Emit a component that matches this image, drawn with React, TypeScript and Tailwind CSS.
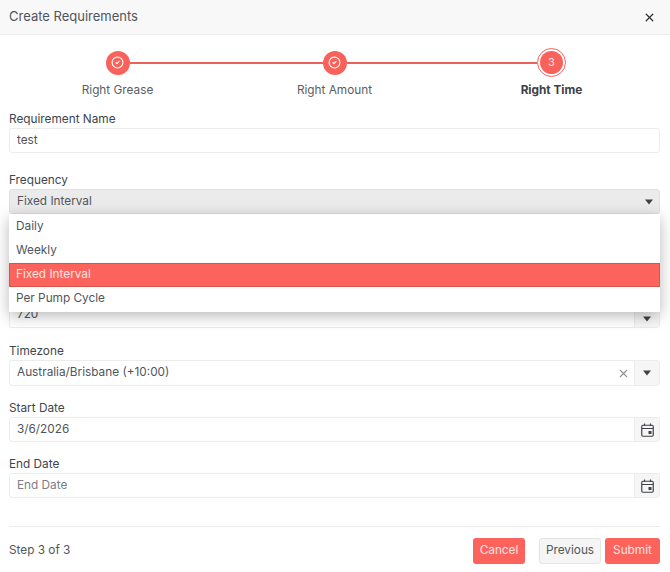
import { CircleCheck, X } from 'lucide-react'

const Caret = () => (
  <svg width="8" height="6" viewBox="0 0 8 6" className="text-[#3f4247]">
    <path d="M0 0.5h8L4 5.5z" fill="currentColor" />
  </svg>
)

const CalendarIcon = () => (
  <svg width="13" height="14" viewBox="0 0 13 14" fill="none" className="text-[#3f4247]">
    <rect x="0.75" y="2.25" width="11.5" height="11" rx="1.2" stroke="currentColor" strokeWidth="1.2" />
    <path d="M0.75 5.5h11.5" stroke="currentColor" strokeWidth="1.2" />
    <path d="M3.5 0.5v2.5M9.5 0.5v2.5" stroke="currentColor" strokeWidth="1.2" />
    <rect x="7.5" y="8" width="3" height="3" fill="currentColor" />
  </svg>
)

const AddOn = ({ children }: { children: React.ReactNode }) => (
  <div className="flex w-[25px] shrink-0 items-center justify-center border-l border-[#ececec] bg-[#f6f6f6]">
    {children}
  </div>
)

const Label = ({ children }: { children: React.ReactNode }) => (
  <div className="h-[18px] text-[11.8px] leading-[18px] text-[#40454d]">{children}</div>
)

const inputClass =
  'min-w-0 flex-1 bg-transparent px-[7px] text-[11.8px] text-[#50555c] outline-none placeholder:text-[#7b8087]'

const Step = ({
  label,
  lineLeft,
  lineRight,
  current,
}: {
  label: string
  lineLeft?: boolean
  lineRight?: boolean
  current?: boolean
}) => (
  <div className="flex flex-col items-center">
    <div className="flex h-[29px] w-full items-center">
      <div className={`h-[2px] flex-1 ${lineLeft ? 'bg-[#e9625c]' : ''}`} />
      {current ? (
        <div className="flex size-[29px] items-center justify-center rounded-full border border-[#f9625b] bg-white">
          <div className="flex size-[23px] items-center justify-center rounded-full bg-[#f9625b] text-[11px] text-[#fde3e1]">
            3
          </div>
        </div>
      ) : (
        <div className="flex size-[24px] items-center justify-center rounded-full bg-[#f9625b]">
          <CircleCheck size={13} className="text-white" strokeWidth={2} />
        </div>
      )}
      <div className={`h-[2px] flex-1 ${lineRight ? 'bg-[#e9625c]' : ''}`} />
    </div>
    <div className={`mt-[4px] h-[18px] text-[11.8px] leading-[18px] ${current ? 'font-bold text-[#3d4045]' : 'text-[#5a5e64]'}`}>
      {label}
    </div>
  </div>
)

export default function App() {
  return (
    <div className="flex h-[572px] w-[670px] flex-col overflow-hidden bg-white font-['Inter',sans-serif]">
      {/* Header */}
      <div className="flex h-[35px] shrink-0 items-center justify-between border-b border-[#ebebeb] bg-[#f8f8f8] pl-[9px] pr-[14px]">
        <span className="text-[13px] text-[#50555c]">Create Requirements</span>
        <X size={13} strokeWidth={2.4} className="text-[#2f3236]" />
      </div>

      <div className="flex flex-1 flex-col pl-[9px] pr-[10px]">
        {/* Stepper */}
        <div className="mt-[13px] grid grid-cols-3">
          <Step label="Right Grease" lineRight />
          <Step label="Right Amount" lineLeft lineRight />
          <Step label="Right Time" lineLeft current />
        </div>

        {/* Form */}
        <div className="mt-[11px]">
          <Label>Requirement Name</Label>
          <div className="flex h-[25px] rounded-[3px] border border-[#ececec]">
            <input readOnly value="test" className={inputClass} />
          </div>
        </div>

        <div className="relative mt-[18px]">
          <Label>Frequency</Label>
          <div className="flex h-[25px] items-center justify-between rounded-[3px] border border-[#e0e0e0] bg-[#ebebeb] pl-[7px] pr-[6px] text-[11.8px] text-[#50555c]">
            <span>Fixed Interval</span>
            <Caret />
          </div>
          <div className="absolute left-0 right-0 top-[43px] z-10 bg-white py-[1px] text-[11.8px] text-[#50555c] shadow-[0_4px_14px_rgba(0,0,0,0.28)]">
            <div className="flex h-[24px] items-center pl-[7px]">Daily</div>
            <div className="flex h-[24px] items-center pl-[7px]">Weekly</div>
            <div className="flex h-[24px] items-center border border-[#d9534d] bg-[#fb635c] pl-[6px] text-[#fde3e1]">Fixed Interval</div>
            <div className="flex h-[24px] items-center pl-[7px]">Per Pump Cycle</div>
          </div>
        </div>

        {/* Field under the open menu, only its lower part shows */}
        <div className="mt-[88px] flex h-[26px] overflow-hidden rounded-[3px] border border-[#ececec]">
          <input readOnly value="720" className={inputClass} />
          <AddOn>
            <div className="mt-[8px]">
              <Caret />
            </div>
          </AddOn>
        </div>

        <div className="mt-[14px]">
          <Label>Timezone</Label>
          <div className="flex h-[26px] overflow-hidden rounded-[3px] border border-[#ececec]">
            <input readOnly value="Australia/Brisbane (+10:00)" className={inputClass} />
            <div className="flex items-center pr-[4px]">
              <X size={13} className="text-[#8f8f8f]" />
            </div>
            <AddOn>
              <Caret />
            </AddOn>
          </div>
        </div>

        <div className="mt-[13px]">
          <Label>Start Date</Label>
          <div className="flex h-[25px] overflow-hidden rounded-[3px] border border-[#ececec]">
            <input readOnly value="3/6/2026" className={inputClass} />
            <AddOn>
              <CalendarIcon />
            </AddOn>
          </div>
        </div>

        <div className="mt-[13px]">
          <Label>End Date</Label>
          <div className="flex h-[25px] overflow-hidden rounded-[3px] border border-[#ececec]">
            <input readOnly placeholder="End Date" className={inputClass} />
            <AddOn>
              <CalendarIcon />
            </AddOn>
          </div>
        </div>

        {/* Footer */}
        <div className="mt-[28px] flex items-center justify-between border-t border-[#ebebeb] pt-[11px]">
          <span className="text-[11.8px] text-[#50555c]">Step 3 of 3</span>
          <div className="flex items-center">
            <button className="mr-[14px] h-[26px] w-[52px] rounded-[3px] bg-[#fb635c] text-[11.8px] text-[#fde3e1]">Cancel</button>
            <button className="mr-[4px] h-[26px] w-[62px] rounded-[3px] border border-[#e4e4e4] bg-[#f5f5f5] text-[11.8px] text-[#50555c]">Previous</button>
            <button className="h-[26px] w-[55px] rounded-[3px] bg-[#fb635c] text-[11.8px] text-[#fde3e1]">Submit</button>
          </div>
        </div>
      </div>
    </div>
  )
}
